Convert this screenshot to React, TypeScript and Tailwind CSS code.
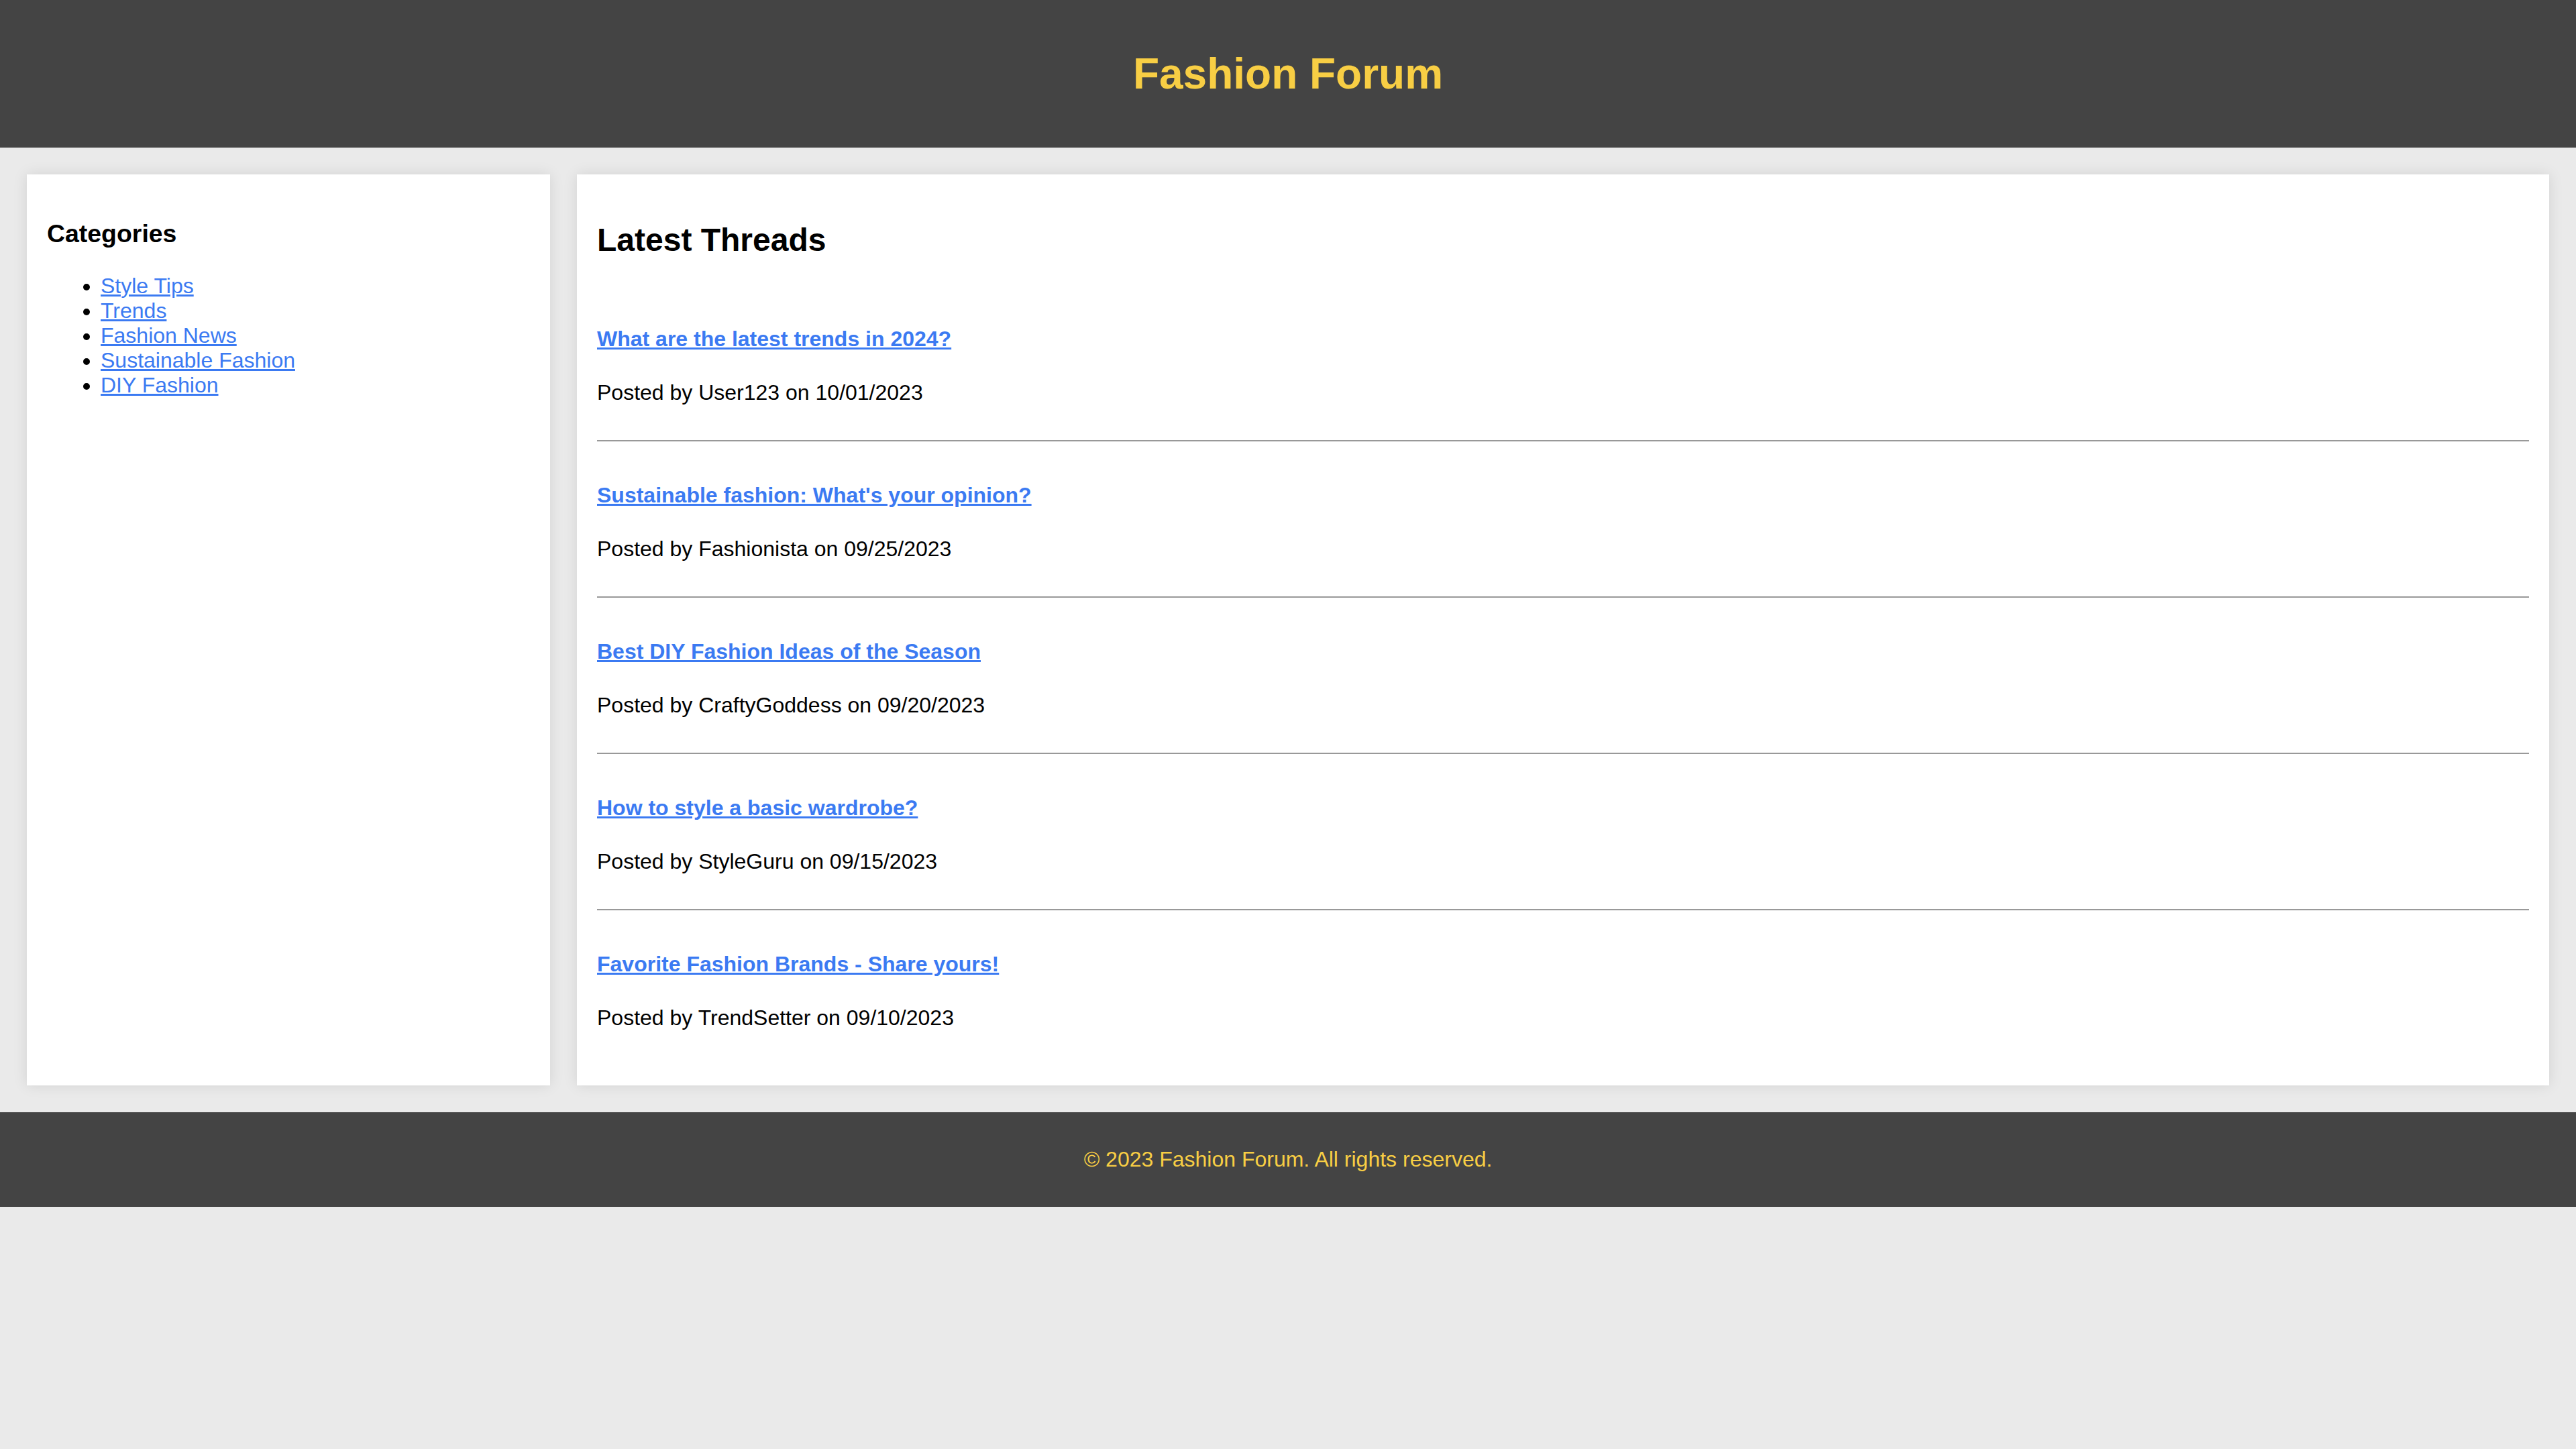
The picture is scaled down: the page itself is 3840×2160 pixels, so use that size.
import React from "react";

const categories = ["Style Tips", "Trends", "Fashion News", "Sustainable Fashion", "DIY Fashion"];

const threads = [
  { title: "What are the latest trends in 2024?", author: "User123", date: "10/01/2023" },
  { title: "Sustainable fashion: What's your opinion?", author: "Fashionista", date: "09/25/2023" },
  { title: "Best DIY Fashion Ideas of the Season", author: "CraftyGoddess", date: "09/20/2023" },
  { title: "How to style a basic wardrobe?", author: "StyleGuru", date: "09/15/2023" },
  { title: "Favorite Fashion Brands - Share yours!", author: "TrendSetter", date: "09/10/2023" },
];

export default function App() {
  return (
    <div className="min-h-screen bg-[#eaeaea] text-[32px] leading-[normal] text-black font-['Liberation_Sans',Arial,sans-serif]">
      <header className="bg-[#444444] p-[30px] text-center">
        <h1 className="my-[42.88px] text-[64px] font-bold leading-[normal] text-[#f8ce44]">Fashion Forum</h1>
      </header>

      <div className="m-[40px] flex gap-[40px]">
        <aside className="w-[780px] shrink-0 bg-white p-[30px] shadow-[0_0_20px_rgba(0,0,0,0.1)]">
          <h3 className="my-[37.44px] text-[37.44px] font-bold leading-[normal]">Categories</h3>
          <ul className="my-[32px] list-disc pl-[80px]">
            {categories.map((c) => (
              <li key={c}>
                <a href="#" className="text-[#3b7af2] underline">
                  {c}
                </a>
              </li>
            ))}
          </ul>
        </aside>

        <main className="flex-1 bg-white p-[30px] shadow-[0_0_20px_rgba(0,0,0,0.1)]">
          <h2 className="my-[39.84px] text-[48px] font-bold leading-[normal]">Latest Threads</h2>
          {threads.map((t, i) => (
            <div
              key={t.title}
              className={
                i === threads.length - 1
                  ? "py-[20px]"
                  : "border-b-2 border-[#999999] py-[20px]"
              }
            >
              <h4 className="my-[42.56px] text-[32px] font-bold leading-[normal]">
                <a href="#" className="text-[#3b7af2] underline">
                  {t.title}
                </a>
              </h4>
              <p className="my-[32px]">
                Posted by {t.author} on {t.date}
              </p>
            </div>
          ))}
        </main>
      </div>

      <footer className="bg-[#444444] py-[20px] text-center text-[#f8ce44]">
        <p className="my-[32px]">© 2023 Fashion Forum. All rights reserved.</p>
      </footer>
    </div>
  );
}
